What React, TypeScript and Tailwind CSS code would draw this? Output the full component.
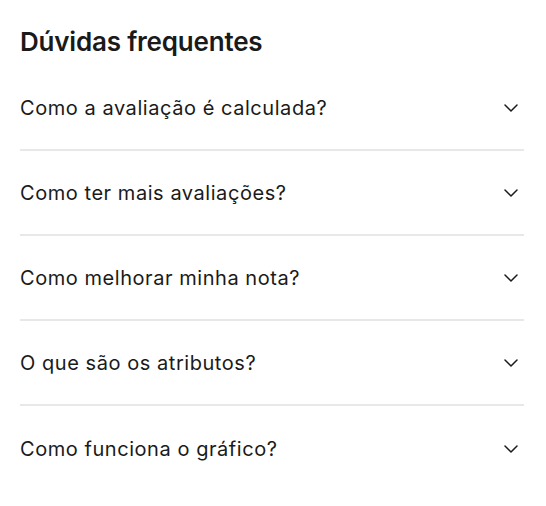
const questions = [
  "Como a avaliação é calculada?",
  "Como ter mais avaliações?",
  "Como melhorar minha nota?",
  "O que são os atributos?",
  "Como funciona o gráfico?",
];

function Chevron() {
  return (
    <svg width="14" height="8" viewBox="0 0 14 8" fill="none" className="shrink-0">
      <path d="M1 1l6 6 6-6" stroke="#1a1a1a" strokeWidth="1.5" strokeLinecap="round" strokeLinejoin="round" />
    </svg>
  );
}

export default function App() {
  return (
    <div className="min-h-screen bg-white pl-5 pr-[22px] pt-[26px] font-['Inter',sans-serif] text-[#1a1a1a]">
      <h2 className="text-[26px] font-semibold leading-8 tracking-[-0.2px]">Dúvidas frequentes</h2>
      <div className="mt-2 flex flex-col">
        {questions.map((q, i) => (
          <button
            key={q}
            className={`flex h-[85px] items-center justify-between pr-[6px] text-left ${
              i < questions.length - 1 ? "border-b-2 border-[#e8e8e8]" : ""
            }`}
          >
            <span className="text-[20px] leading-6 tracking-[0.55px]">{q}</span>
            <Chevron />
          </button>
        ))}
      </div>
    </div>
  );
}
